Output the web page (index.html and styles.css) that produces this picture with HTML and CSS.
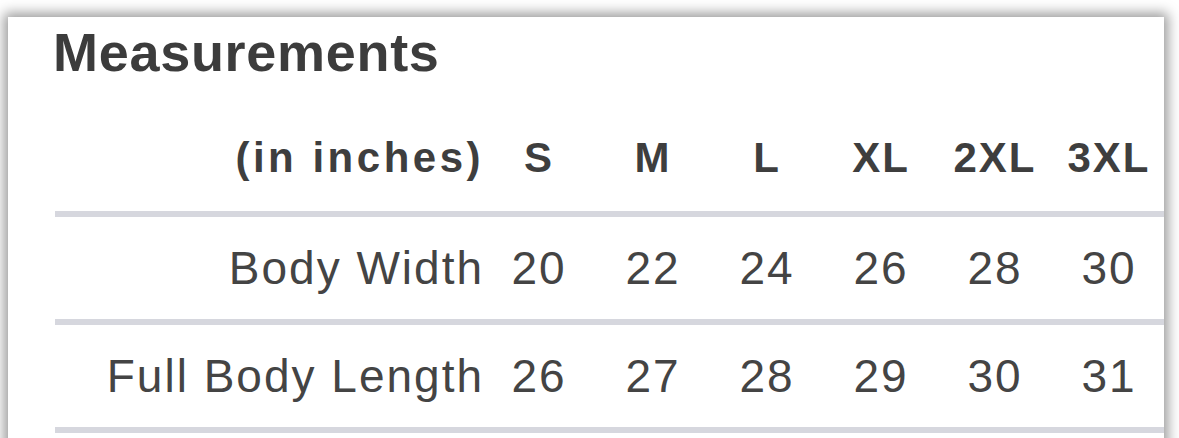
FILE: index.html
```html
<!DOCTYPE html>
<html lang="en">
<head>
<meta charset="utf-8">
<title>Measurements</title>
<link rel="stylesheet" href="styles.css">
</head>
<body>
<div class="page">
  <section class="card">
    <h1 class="title">Measurements</h1>
    <div class="table">
      <div class="row head">
        <div class="label">(in inches)</div>
        <div class="cell">S</div>
        <div class="cell">M</div>
        <div class="cell">L</div>
        <div class="cell">XL</div>
        <div class="cell">2XL</div>
        <div class="cell">3XL</div>
      </div>
      <div class="row body">
        <div class="label">Body Width</div>
        <div class="cell">20</div>
        <div class="cell">22</div>
        <div class="cell">24</div>
        <div class="cell">26</div>
        <div class="cell">28</div>
        <div class="cell">30</div>
      </div>
      <div class="row body">
        <div class="label">Full Body Length</div>
        <div class="cell">26</div>
        <div class="cell">27</div>
        <div class="cell">28</div>
        <div class="cell">29</div>
        <div class="cell">30</div>
        <div class="cell">31</div>
      </div>
    </div>
  </section>
</div>
</body>
</html>
```
FILE: styles.css
```css
html, body {
  margin: 0;
  padding: 0;
  background: #ffffff;
  overflow: hidden;
}

.page {
  width: 1179px;
  height: 438px;
  box-sizing: border-box;
  padding: 17px 15px 0 8px;
  overflow: hidden;
  background: #ffffff;
}

.card {
  background: #ffffff;
  height: 600px;
  padding: 8px 0 0 47px;
  box-sizing: border-box;
  overflow: hidden;
  box-shadow: 0 0 12px 4px rgba(0, 0, 0, 0.4);
  font-family: "Liberation Sans", Arial, sans-serif;
  color: #434343;
}

.title {
  margin: 0 0 26px -2px;
  font-size: 54px;
  line-height: 54px;
  font-weight: bold;
  letter-spacing: 0.7px;
  color: #3c3c3c;
}

.table {
  width: 1112px;
}

.row {
  display: grid;
  grid-template-columns: 427px repeat(6, 114px);
  border-bottom: 6px solid #d6d7de;
}

.label {
  text-align: right;
  margin-right: -2px;
}

.cell {
  text-align: center;
}

.head {
  font-size: 42px;
  line-height: 106px;
  font-weight: bold;
  letter-spacing: 3.5px;
  color: #3e3e3e;
}

.head .cell {
  letter-spacing: 2px;
}

.body {
  font-size: 46px;
  line-height: 102px;
  letter-spacing: 2px;
  color: #444444;
}
```
